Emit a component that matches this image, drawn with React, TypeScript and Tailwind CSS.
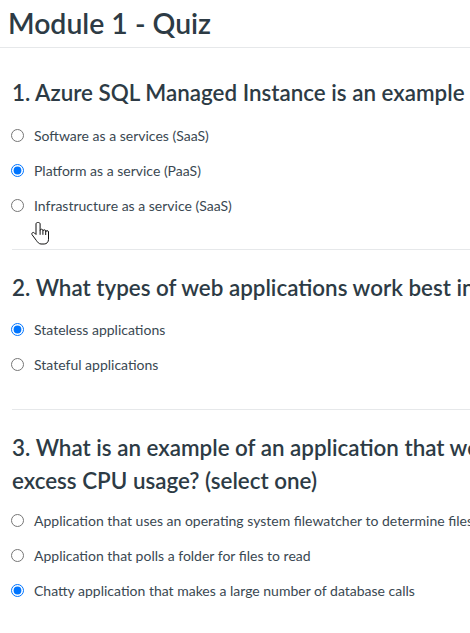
import React from "react";

type Question = {
  id: string;
  title: React.ReactNode;
  options: string[];
  selected: number;
};

const questions: Question[] = [
  {
    id: "q1",
    title: "1. Azure SQL Managed Instance is an example of which service model? (select one)",
    options: [
      "Software as a services (SaaS)",
      "Platform as a service (PaaS)",
      "Infrastructure as a service (SaaS)",
    ],
    selected: 1,
  },
  {
    id: "q2",
    title: "2. What types of web applications work best in a scaled out environment? (select one)",
    options: ["Stateless applications", "Stateful applications"],
    selected: 0,
  },
  {
    id: "q3",
    title: (
      <>
        3. What is an example of an application that would need to be scaled due to
        <br />
        excess CPU usage? (select one)
      </>
    ),
    options: [
      "Application that uses an operating system filewatcher to determine files to read",
      "Application that polls a folder for files to read",
      "Chatty application that makes a large number of database calls",
    ],
    selected: 2,
  },
];

const sectionClass = [
  "mx-3 border-b border-[#e6e8ea] pb-[26px] pt-[28px]",
  "mx-3 border-b border-[#e6e8ea] pb-[27px] pt-[21px]",
  "mx-3 pt-[21px]",
];

const optionsClass = ["mt-[9px] flex flex-col", "mt-[8px] flex flex-col", "mt-[6px] flex flex-col"];

function HandCursor() {
  return (
    <svg
      width="18"
      height="25"
      viewBox="0 0 18 25"
      className="pointer-events-none absolute left-[31px] top-[221px]"
    >
      <path
        d="M6.5 1.5c-.9 0-1.5.7-1.5 1.5v10.5l-1.6-1.6c-.6-.6-1.6-.6-2.2 0-.5.6-.5 1.4 0 2l4.2 5.6c1.1 1.6 2.6 3.5 4.6 3.5h3.2c2.5 0 4.3-2 4.3-4.6V11c0-.8-.6-1.4-1.4-1.4s-1.4.6-1.4 1.4v-.8c0-.8-.6-1.4-1.4-1.4s-1.4.6-1.4 1.4v-.6c0-.8-.6-1.4-1.4-1.4S9.1 8.8 9.1 9.6V3c0-.8-.7-1.5-1.5-1.5z"
        fill="#fff"
        stroke="#111"
        strokeWidth="1"
        strokeLinejoin="round"
      />
      <path d="M9.1 9.6v4.2M11.9 10.2v3.6M14.7 11v3" stroke="#111" strokeWidth="1" fill="none" />
    </svg>
  );
}

export default function App() {
  return (
    <div
      className="relative h-[633px] w-[470px] overflow-hidden bg-white text-[#2d3b45]"
      style={{ fontFamily: "Lato, 'Noto Sans', sans-serif" }}
    >
      <div className="w-[1000px]">
        <h1 className="border-b border-[#e6e8ea] px-2 pb-[7px] pt-[6px] text-[28.4px] font-semibold leading-[34px]">
          Module 1 - Quiz
        </h1>

        {questions.map((q, qi) => (
          <section key={q.id} className={sectionClass[qi]}>
            <h2 className="whitespace-nowrap text-[22.4px] font-semibold leading-[33px]">{q.title}</h2>
            <div className={optionsClass[qi]}>
              {q.options.map((opt, oi) => (
                <label
                  key={opt}
                  className="flex h-[35px] items-center gap-[10px] whitespace-nowrap text-[14px] text-[#3a4852]"
                >
                  <input
                    type="radio"
                    name={q.id}
                    defaultChecked={oi === q.selected}
                    className="m-0 ml-[-1px] h-[13px] w-[13px]"
                  />
                  <span>{opt}</span>
                </label>
              ))}
            </div>
          </section>
        ))}
      </div>
      <HandCursor />
    </div>
  );
}
